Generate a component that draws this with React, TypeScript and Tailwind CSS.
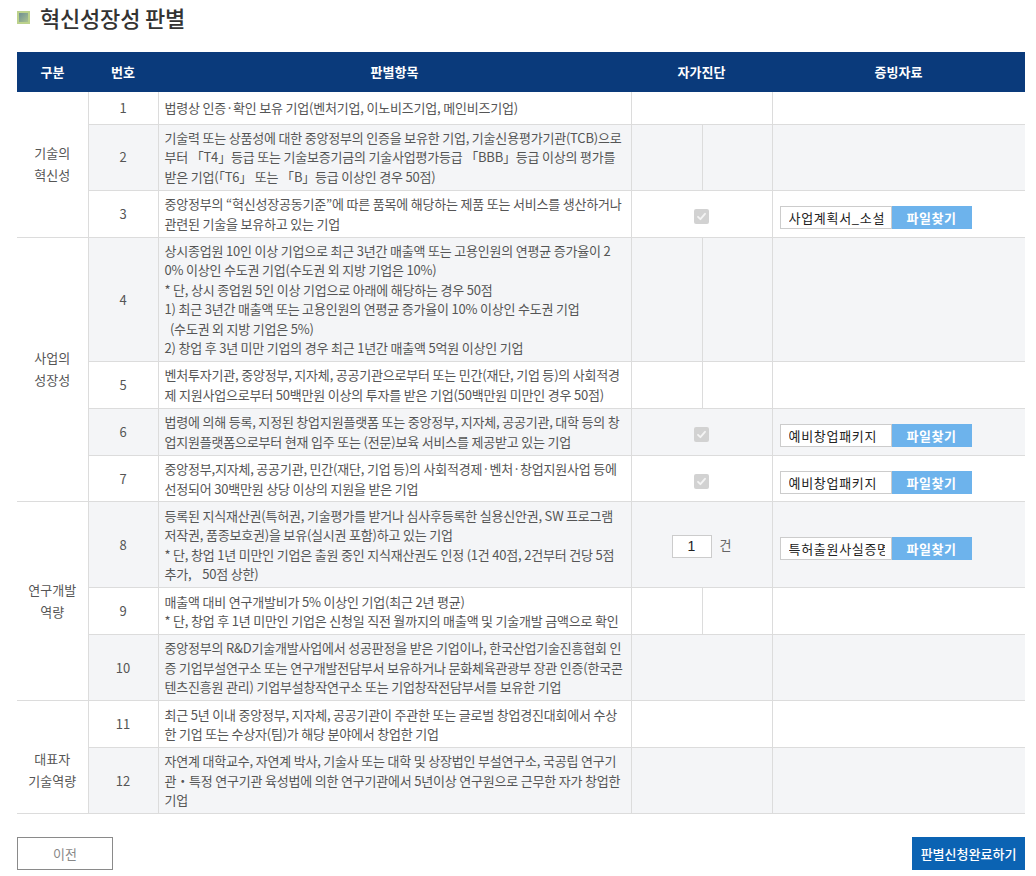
type Diag = 'empty' | 'split' | 'check' | 'count'

type Row = {
  no: number
  lines: string[]
  diag: Diag
  file?: string
}

type Group = {
  label: string[]
  rows: Row[]
  labelClass?: string
}

const groups: Group[] = [
  {
    label: ['기술의', '혁신성'],
    rows: [
      { no: 1, diag: 'empty', lines: ['법령상 인증·확인 보유 기업(벤처기업, 이노비즈기업, 메인비즈기업)'] },
      {
        no: 2,
        diag: 'split',
        lines: [
          '기술력 또는 상품성에 대한 중앙정부의 인증을 보유한 기업, 기술신용평가기관(TCB)으로',
          '부터 「T4」등급 또는 기술보증기금의 기술사업평가등급 「BBB」등급 이상의 평가를',
          '받은 기업(「T6」 또는 「B」등급 이상인 경우 50점)',
        ],
      },
      {
        no: 3,
        diag: 'check',
        file: '사업계획서_소설',
        lines: [
          '중앙정부의 “혁신성장공동기준”에 따른 품목에 해당하는 제품 또는 서비스를 생산하거나',
          '관련된 기술을 보유하고 있는 기업',
        ],
      },
    ],
  },
  {
    label: ['사업의', '성장성'],
    rows: [
      {
        no: 4,
        diag: 'split',
        lines: [
          '상시종업원 10인 이상 기업으로 최근 3년간 매출액 또는 고용인원의 연평균 증가율이 2',
          '0% 이상인 수도권 기업(수도권 외 지방 기업은 10%)',
          '* 단, 상시 종업원 5인 이상 기업으로 아래에 해당하는 경우 50점',
          '1) 최근 3년간 매출액 또는 고용인원의 연평균 증가율이 10% 이상인 수도권 기업',
          '\u00a0\u00a0(수도권 외 지방 기업은 5%)',
          '2) 창업 후 3년 미만 기업의 경우 최근 1년간 매출액 5억원 이상인 기업',
        ],
      },
      {
        no: 5,
        diag: 'split',
        lines: [
          '벤처투자기관, 중앙정부, 지자체, 공공기관으로부터 또는 민간(재단, 기업 등)의 사회적경',
          '제 지원사업으로부터 50백만원 이상의 투자를 받은 기업(50백만원 미만인 경우 50점)',
        ],
      },
      {
        no: 6,
        diag: 'check',
        file: '예비창업패키지',
        lines: [
          '법령에 의해 등록, 지정된 창업지원플랫폼 또는 중앙정부, 지자체, 공공기관, 대학 등의 창',
          '업지원플랫폼으로부터 현재 입주 또는 (전문)보육 서비스를 제공받고 있는 기업',
        ],
      },
      {
        no: 7,
        diag: 'check',
        file: '예비창업패키지',
        lines: [
          '중앙정부,지자체, 공공기관, 민간(재단, 기업 등)의 사회적경제·벤처·창업지원사업 등에',
          '선정되어 30백만원 상당 이상의 지원을 받은 기업',
        ],
      },
    ],
  },
  {
    label: ['연구개발', '역량'],
    rows: [
      {
        no: 8,
        diag: 'count',
        file: '특허출원사실증명',
        lines: [
          '등록된 지식재산권(특허권, 기술평가를 받거나 심사후등록한 실용신안권, SW 프로그램',
          '저작권, 품종보호권)을 보유(실시권 포함)하고 있는 기업',
          '* 단, 창업 1년 미만인 기업은 출원 중인 지식재산권도 인정 (1건 40점, 2건부터 건당 5점',
          '추가,\u00a0\u00a0\u00a0 50점 상한)',
        ],
      },
      {
        no: 9,
        diag: 'split',
        lines: [
          '매출액 대비 연구개발비가 5% 이상인 기업(최근 2년 평균)',
          '* 단, 창업 후 1년 미만인 기업은 신청일 직전 월까지의 매출액 및 기술개발 금액으로 확인',
        ],
      },
      {
        no: 10,
        diag: 'empty',
        lines: [
          '중앙정부의 R&D기술개발사업에서 성공판정을 받은 기업이나, 한국산업기술진흥협회 인',
          '증 기업부설연구소 또는 연구개발전담부서 보유하거나 문화체육관광부 장관 인증(한국콘',
          '텐츠진흥원 관리) 기업부설창작연구소 또는 기업창작전담부서를 보유한 기업',
        ],
      },
    ],
  },
  {
    label: ['대표자', '기술역량'],
    labelClass: 'pt-[26px]',
    rows: [
      {
        no: 11,
        diag: 'empty',
        lines: [
          '최근 5년 이내 중앙정부, 지자체, 공공기관이 주관한 또는 글로벌 창업경진대회에서 수상',
          '한 기업 또는 수상자(팀)가 해당 분야에서 창업한 기업',
        ],
      },
      {
        no: 12,
        diag: 'empty',
        lines: [
          '자연계 대학교수, 자연계 박사, 기술사 또는 대학 및 상장법인 부설연구소, 국공립 연구기',
          '관・특정 연구기관 육성법에 의한 연구기관에서 5년이상 연구원으로 근무한 자가 창업한',
          '기업',
        ],
      },
    ],
  },
]

const cell = 'border-b border-l border-[#dcdcdc]'

function CheckMark() {
  return (
    <span className="inline-flex items-center justify-center w-[15px] h-[15px] rounded-[2px] bg-[#d2d2d2] align-middle">
      <svg width="11" height="11" viewBox="0 0 11 11" fill="none">
        <path d="M2 5.8 L4.4 8.2 L9 2.8" stroke="#f4f4f4" strokeWidth="1.8" strokeLinecap="round" strokeLinejoin="round" />
      </svg>
    </span>
  )
}

function FileField({ name }: { name: string }) {
  return (
    <div className="flex items-stretch h-[23px] mt-[8px]">
      <div className="w-[112px] border border-[#cccccc] bg-white pl-[8px] pr-[6px]">
        <div className="overflow-hidden whitespace-nowrap text-[13px] leading-[21px] tracking-[0.7px] text-[#222]">{name}</div>
      </div>
      <button type="button" className="w-[80px] bg-[#6db3ec] text-white text-[13px] font-bold tracking-[0.5px]">
        파일찾기
      </button>
    </div>
  )
}

function DiagCells({ diag }: { diag: Diag }) {
  if (diag === 'split') {
    return (
      <>
        <td className={cell}></td>
        <td className={cell}></td>
      </>
    )
  }
  return (
    <td colSpan={2} className={cell + ' text-center'}>
      {diag === 'check' && <CheckMark />}
      {diag === 'count' && (
        <div className="inline-flex items-center gap-[8px]">
          <div className="w-[40px] h-[23px] border border-[#cccccc] bg-white text-center text-[14px] leading-[21px] text-[#222] font-['Liberation_Sans',sans-serif]">
            1
          </div>
          <span className="text-[13px] text-[#666] -mt-[2px]">건</span>
        </div>
      )}
    </td>
  )
}

export default function App() {
  let idx = 0

  return (
    <div className="w-[1036px] h-[876px] bg-white font-['Noto_Sans_CJK_KR','Noto_Sans',sans-serif] text-[#555]">
      <div className="pl-[17px] pr-[11px] pt-[3px]">
        <div className="flex items-center h-[28px]">
          <span className="w-[13px] h-[13px] border-2 border-[#bcd28c] bg-gradient-to-br from-[#6f8f93] to-[#a9c18e]"></span>
          <h2 className="ml-[10px] text-[22px] font-medium text-[#333] tracking-[-0.2px]">혁신성장성 판별</h2>
        </div>

        <table className="mt-[21px] w-[1008px] table-fixed border-collapse">
          <colgroup>
            <col className="w-[71px]" />
            <col className="w-[70px]" />
            <col className="w-[473px]" />
            <col className="w-[71px]" />
            <col className="w-[70px]" />
            <col className="w-[253px]" />
          </colgroup>
          <thead>
            <tr className="h-[40px] bg-[#0a3a7b] text-white text-[13px] font-bold">
              <th>구분</th>
              <th>번호</th>
              <th>판별항목</th>
              <th colSpan={2}>자가진단</th>
              <th>증빙자료</th>
            </tr>
          </thead>
          <tbody>
            {groups.map((g) =>
              g.rows.map((r, i) => {
                idx++
                const bg = idx % 2 === 0 ? 'bg-[#f4f5f7]' : 'bg-white'
                return (
                  <tr key={r.no} className={bg}>
                    {i === 0 && (
                      <td rowSpan={g.rows.length} className={'border-b border-[#dcdcdc] bg-white text-center text-[13px] leading-[22px] ' + (g.labelClass ?? '')}>
                        {g.label.map((l) => (
                          <div key={l}>{l}</div>
                        ))}
                      </td>
                    )}
                    <td className={cell + ' text-center text-[13px] h-[32px]'}>{r.no}</td>
                    <td className={cell + ' px-[6px] py-[3.5px] text-[13px] leading-[19.4px] tracking-[-0.2px]'}>
                      {r.lines.map((l, k) => (
                        <div key={k} className="whitespace-nowrap">
                          {l}
                        </div>
                      ))}
                    </td>
                    <DiagCells diag={r.diag} />
                    <td className={cell + ' px-[7px]'}>{r.file && <FileField name={r.file} />}</td>
                  </tr>
                )
              })
            )}
          </tbody>
        </table>

        <div className="flex justify-between mt-[23px]">
          <button type="button" className="w-[96px] h-[33px] border border-[#8a8a8a] bg-white text-[13px] text-[#888]">
            이전
          </button>
          <button type="button" className="w-[113px] h-[33px] bg-[#0b63b3] text-white text-[13px] font-medium">
            판별신청완료하기
          </button>
        </div>
      </div>
    </div>
  )
}
